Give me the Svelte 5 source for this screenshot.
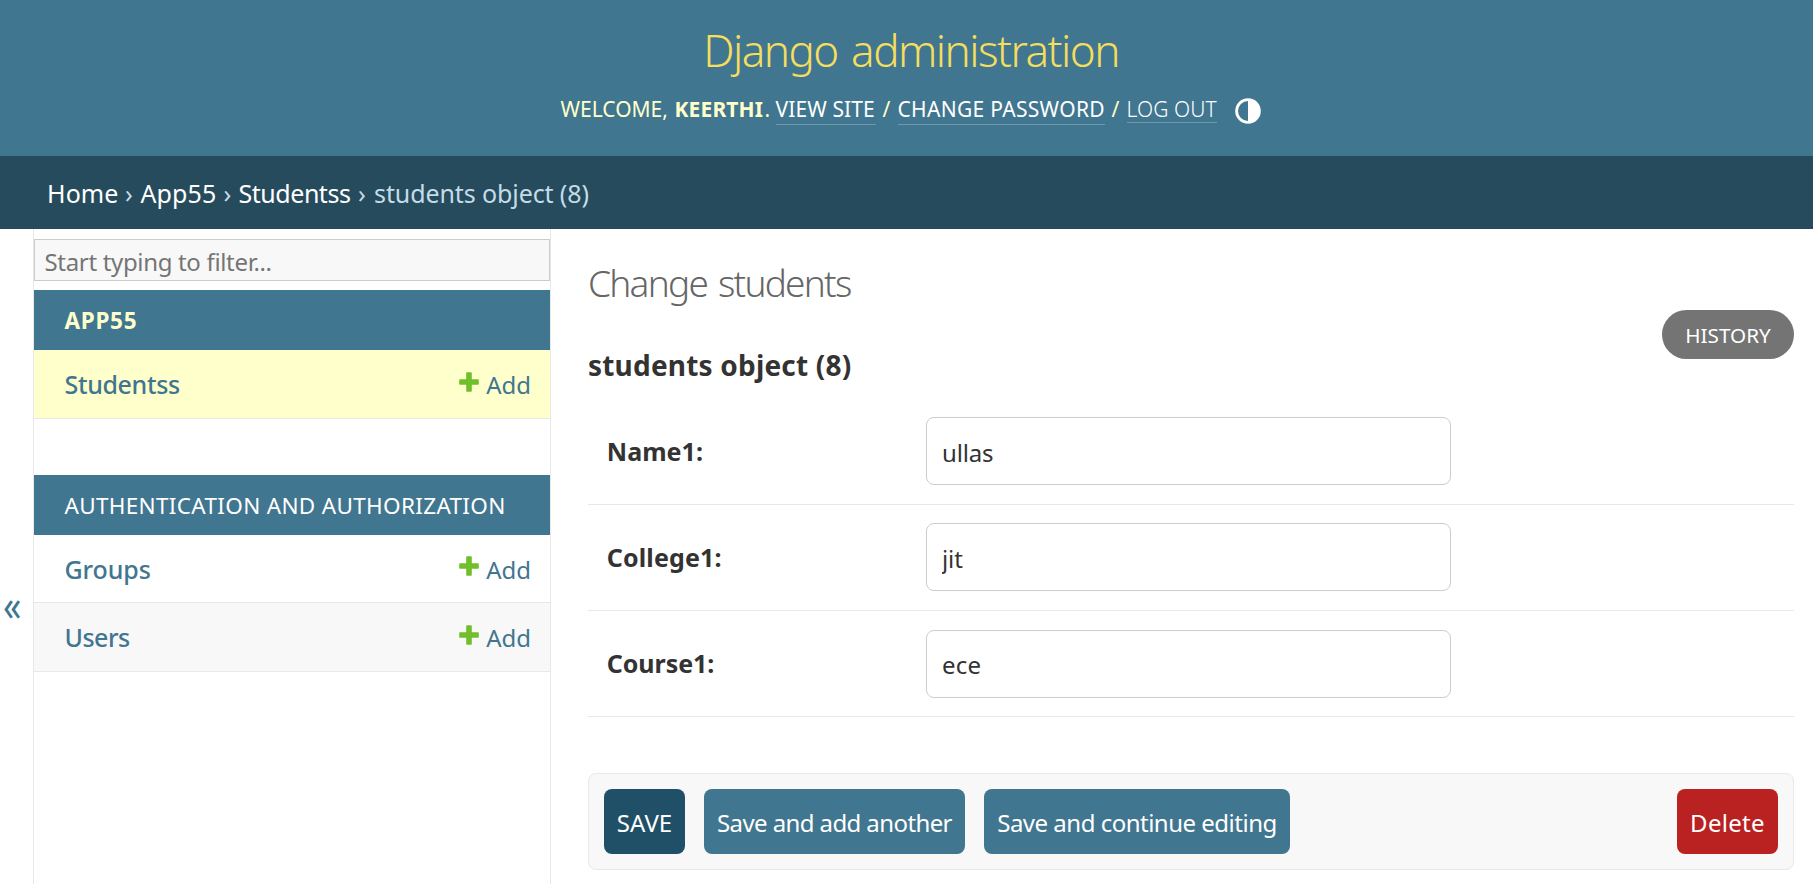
<script>
  const apps = [
    { name: 'APP55', current: true, ls: 0.7, models: [{ name: 'Studentss', current: true, ls: -0.35 }] },
    {
      name: 'AUTHENTICATION AND AUTHORIZATION', current: false, ls: 0.32,
      models: [{ name: 'Groups', ls: -0.1 }, { name: 'Users', ls: -0.5, alt: true }]
    }
  ];
  const fields = [
    { label: 'Name1:', value: 'ullas', ls: 0.05, vls: -0.15 },
    { label: 'College1:', value: 'jit', ls: 0.15, vls: -0.1 },
    { label: 'Course1:', value: 'ece', ls: -0.05, vls: 0.2 }
  ];
</script>

<div class="page">
  <header>
    <h1 class="brand">Django administration</h1>
    <div class="tools">
      <span class="welcome">WELCOME,</span>
      <strong>KEERTHI</strong><span class="dot">.</span>
      <a class="view" href="#site">VIEW SITE</a>
      <span class="slash">/</span>
      <a class="password" href="#password">CHANGE PASSWORD</a>
      <span class="slash last">/</span>
      <button class="logout">LOG OUT</button>
      <button class="theme" aria-label="Toggle theme">
        <svg viewBox="0 0 26 26" width="26" height="26">
          <circle cx="13" cy="13" r="11.4" fill="none" stroke="#fff" stroke-width="2.8" />
          <path d="M13 1a12 12 0 0 1 0 24z" fill="#fff" />
        </svg>
      </button>
    </div>
  </header>

  <nav class="crumbs">
    <a class="home" href="#home">Home</a><span class="s1">›</span>
    <a class="app" href="#app">App55</a><span class="s2">›</span>
    <a class="model" href="#model">Studentss</a><span class="s3">›</span>
    <span class="object">students object (8)</span>
  </nav>

  <div class="main">
    <button class="toggle" aria-label="Toggle navigation"><span>«</span></button>
    <aside>
      <input class="filter" type="search" placeholder="Start typing to filter..." />
      {#each apps as app}
        <section>
          <h3 class:current={app.current} style="letter-spacing: {app.ls}px">{app.name}</h3>
          {#each app.models as m}
            <div class="model-row" class:current={m.current} class:alt={m.alt}>
              <a class="name" href="#list" style="letter-spacing: {m.ls}px">{m.name}</a>
              <a class="add" href="#add">
                <svg viewBox="0 0 20 20" width="20" height="20">
                  <path d="M8 1h4v7h7v4h-7v7H8v-7H1V8h7z" fill="#70bf2b" stroke="#70bf2b" stroke-width="1.6" stroke-linejoin="round" />
                </svg>
                <span>Add</span>
              </a>
            </div>
          {/each}
        </section>
      {/each}
    </aside>

    <main>
      <div class="heading">
        <div>
          <h1>Change students</h1>
          <h2>students object (8)</h2>
        </div>
        <a class="history" href="#history">HISTORY</a>
      </div>
      {#each fields as f}
        <div class="field">
          <label for={f.label} style="letter-spacing: {f.ls}px">{f.label}</label>
          <input id={f.label} value={f.value} style="letter-spacing: {f.vls}px" />
        </div>
      {/each}
      <div class="submit">
        <button class="save">SAVE</button>
        <button class="another">Save and add another</button>
        <button class="continue">Save and continue editing</button>
        <button class="delete">Delete</button>
      </div>
    </main>
  </div>
</div>

<style>
  :global(body) { background: #fff; overflow: hidden; }
  .page, .page :is(button, input) { font-family: "Noto Sans", "Open Sans", sans-serif; }
  .page { height: 884px; display: flex; flex-direction: column; color: #333; overflow: hidden; }
  .page * { box-sizing: border-box; }
  a { text-decoration: none; white-space: nowrap; }
  h1, h2, h3 { margin: 0; }
  button { border: 0; padding: 0; background: none; color: #fff; white-space: nowrap; }

  header { flex: none; height: 156px; padding-top: 20px; background: #417690; color: #ffc; }
  .brand { font-size: 44px; font-weight: 300; line-height: 61px; height: 60px; letter-spacing: -1.52px; word-spacing: 3.5px; color: #f5dd5d; text-align: center; padding-left: 9px; }
  .tools { display: flex; align-items: center; justify-content: center; height: 32px; margin-top: 13px; padding-left: 8px; font-size: 21px; line-height: 32px; white-space: nowrap; }
  .tools a { height: 32px; color: #fff; border-bottom: 1px solid rgba(255, 255, 255, .25); }
  .welcome { width: 114px; }
  strong { width: 90px; letter-spacing: .15px; }
  .dot { width: 11px; }
  .view { width: 100px; letter-spacing: .1px; }
  .slash { width: 22px; text-align: center; }
  .slash.last { width: 22px; }
  .password { width: 207px; letter-spacing: .3px; }
  .logout { width: 90px; height: 28px; font-size: 21px; font-weight: 300; line-height: 28px; letter-spacing: .1px; text-align: left; border-bottom: 1px solid rgba(255, 255, 255, .25); }
  .theme { display: flex; margin: 4px 0 0 18px; }

  .crumbs { flex: none; display: flex; height: 73px; padding-left: 47px; background: #264b5d; color: #c4dce8; font-size: 25px; line-height: 75px; white-space: nowrap; }
  .crumbs a { color: #fff; }
  .home { width: 78px; letter-spacing: .1px; }
  .s1 { width: 15.5px; }
  .app { width: 83px; letter-spacing: .1px; }
  .s2 { width: 15px; }
  .model { width: 119.5px; letter-spacing: -.46px; }
  .s3 { width: 16px; }
  .object { letter-spacing: -.1px; }

  .main { flex: 1; display: flex; min-height: 0; }
  .toggle { width: 33px; flex: none; display: flex; align-items: flex-start; padding: 352px 0 0 3px; color: #417690; font-size: 36px; line-height: 48px; }
  .toggle span { transform: scaleY(1.22); }
  aside { flex: none; width: 518px; padding-top: 10px; border: solid #e8e8e8; border-width: 0 1px; }
  .filter { display: block; width: 100%; height: 42px; margin-bottom: 9px; padding: 2px 9.5px 0; border: 1px solid #ccc; border-radius: 0; background: #f8f8f8; font-size: 24px; letter-spacing: -.33px; appearance: none; }
  .filter::placeholder { color: #757575; }
  section { margin-bottom: 56px; }
  h3 { height: 60px; padding-left: 30.5px; background: #417690; color: #fff; font-size: 22.5px; font-weight: 400; line-height: 62px; white-space: nowrap; }
  h3.current { color: #ffc; font-weight: 700; }
  .model-row { display: flex; align-items: center; height: 68px; padding: 0 19px 0 30.5px; border-bottom: 1px solid #e8e8e8; }
  .model-row a { color: #417690; }
  .model-row.current { height: 69px; background: #ffc; }
  .model-row.alt { height: 69px; background: #f8f8f8; }
  .name { flex: 1; font-size: 25px; font-weight: 500; line-height: 67px; padding-top: 1px; }
  .add { display: flex; align-items: center; font-size: 24px; line-height: 67px; padding-top: 1px; }
  .add svg { margin: -6px 7px 0 0; }

  main { flex: 1; padding: 0 19px 0 37px; }
  .heading { display: flex; justify-content: space-between; height: 169.7px; }
  .heading h1 { margin-top: 29px; font-size: 37px; font-weight: 300; line-height: 50px; letter-spacing: -1.75px; word-spacing: 3px; color: #666; }
  h2 { margin-top: 37px; font-size: 28px; font-weight: 700; line-height: 40px; letter-spacing: .2px; }
  .history { width: 132px; height: 49px; margin-top: 81px; border-radius: 25px; background: #747474; color: #fff; font-size: 20.7px; line-height: 50px; text-align: center; }
  .field { display: flex; align-items: center; height: 106.2px; padding-left: 18.8px; border-bottom: 1px solid #e8e8e8; }
  label { width: 319.2px; margin-top: -1px; font-size: 25px; font-weight: 700; line-height: 34px; }
  .field input { width: 525px; height: 68px; padding: 2px 15px 0; border: 1px solid #ccc; border-radius: 8px; background: #fff; color: #333; font-size: 24px; }
  .submit { display: flex; height: 97px; margin-top: 55.7px; padding: 15px; border: 1px solid #e8e8e8; border-radius: 8px; background: #f8f8f8; }
  .submit button { height: 65px; margin-right: 19px; padding-top: 2px; border-radius: 8px; background: #417690; font-size: 24px; }
  .submit .save { width: 81px; background: #205067; }
  .another { width: 261px; letter-spacing: -.6px; }
  .continue { width: 306px; letter-spacing: -.5px; }
  .submit .delete { width: 101px; margin: 0 0 0 auto; background: #ba2121; letter-spacing: .3px; }
</style>
